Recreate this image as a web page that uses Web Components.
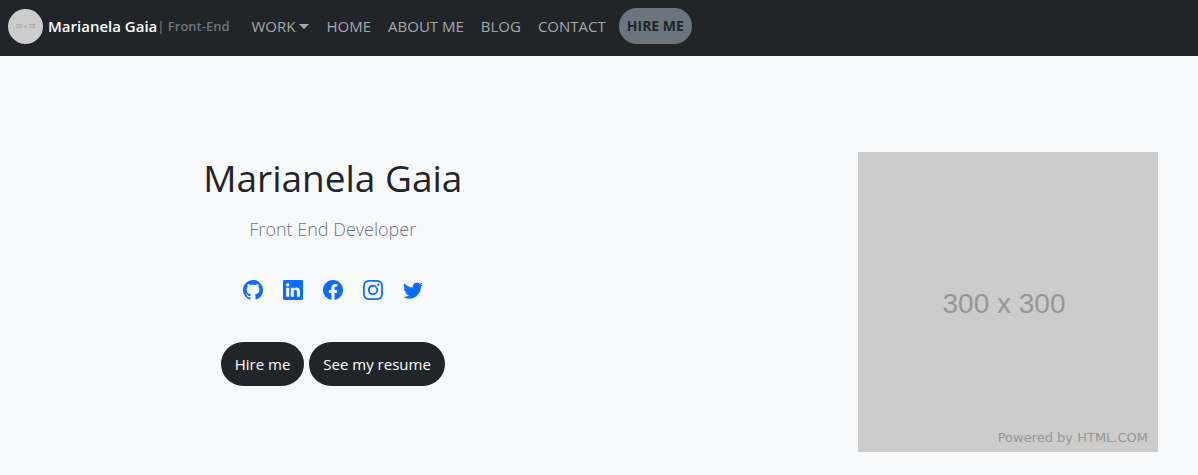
<!DOCTYPE html>
<html lang="en">
<head>
<meta charset="utf-8">
<meta name="viewport" content="width=device-width, initial-scale=1">
<title>Marianela Gaia | Front-End</title>
<style>
body{margin:0;min-height:100vh;background:#f8f9fb;color:#212529;font-family:"Segoe UI","Open Sans","Noto Sans",sans-serif;font-size:15px;line-height:24px}
</style>
</head>
<body>
<site-nav>
  <site-brand name="Marianela Gaia" role-name="| Front-End"></site-brand>
  <nav-link menu>WORK</nav-link>
  <nav-link>HOME</nav-link>
  <nav-link>ABOUT ME</nav-link>
  <nav-link>BLOG</nav-link>
  <nav-link>CONTACT</nav-link>
  <pill-button kind="nav">HIRE ME</pill-button>
</site-nav>
<profile-hero>
  <span slot="name">Marianela Gaia</span>
  <span slot="job">Front End Developer</span>
  <social-link slot="social" icon="github" label="GitHub"></social-link>
  <social-link slot="social" icon="linkedin" label="LinkedIn"></social-link>
  <social-link slot="social" icon="facebook" label="Facebook"></social-link>
  <social-link slot="social" icon="instagram" label="Instagram"></social-link>
  <social-link slot="social" icon="twitter" label="Twitter"></social-link>
  <pill-button slot="actions">Hire me</pill-button>
  <pill-button slot="actions">See my resume</pill-button>
  <placeholder-image slot="picture">300 x 300<span slot="credit">Powered by HTML.COM</span></placeholder-image>
</profile-hero>
<script>
class Base extends HTMLElement {
  connectedCallback() {
    if (!this.shadowRoot) this.attachShadow({mode: 'open'}).innerHTML = this.view();
  }
}
customElements.define('site-nav', class extends Base {
  view() { return `<style>
    :host{display:block;background:#212529}
    nav{display:flex;align-items:center;gap:1px;padding:6px 8px 10px}
  </style><nav aria-label="Main"><slot></slot></nav>`; }
});
customElements.define('site-brand', class extends Base {
  view() { return `<style>
    :host{display:block;margin-right:13px}
    a{display:flex;align-items:center;color:#fff;text-decoration:none;font-weight:600;white-space:nowrap}
    .avatar{display:flex;align-items:center;justify-content:center;width:35px;height:35px;margin-right:5px;border-radius:50%;background:#ccc;color:#999;font:6px/8px "Liberation Sans",sans-serif}
    .role{color:#6c757d;font-size:13px}
  </style><a href="#"><span class="avatar">35 x 35</span><span>${this.getAttribute('name')}</span><span class="role">${this.getAttribute('role-name')}</span></a>`; }
});
customElements.define('nav-link', class extends Base {
  view() { return `<style>
    :host{display:block}
    a{display:flex;align-items:center;padding:8px;color:#a6a8a9;text-decoration:none;white-space:nowrap}
    i{margin-left:4px;border:5px solid transparent;border-top-color:currentColor;border-bottom:0}
  </style><a href="#"><slot></slot>${this.hasAttribute('menu') ? '<i></i>' : ''}</a>`; }
});
customElements.define('pill-button', class extends Base {
  view() { return `<style>
    :host{display:block}
    :host([kind=nav]){margin-left:4px}
    button{display:block;margin:0;padding:10px 14px;border:0;border-radius:22px;background:#212529;color:#fff;font:inherit;line-height:24px;white-space:nowrap;cursor:pointer}
    :host([kind=nav]) button{padding:6px 8px;background:#6c757d;color:#212529;font-size:14px;font-weight:700}
  </style><button type="button"><slot></slot></button>`; }
});
const icons = {
  github: 'M8 0C3.58 0 0 3.58 0 8c0 3.54 2.29 6.53 5.47 7.59.4.07.55-.17.55-.38 0-.19-.01-.82-.01-1.49-2.01.37-2.53-.49-2.69-.94-.09-.23-.48-.94-.82-1.13-.28-.15-.68-.52-.01-.53.63-.01 1.08.58 1.23.82.72 1.21 1.87.87 2.33.66.07-.52.28-.87.51-1.07-1.78-.2-3.64-.89-3.64-3.95 0-.87.31-1.59.82-2.15-.08-.2-.36-1.02.08-2.12 0 0 .67-.21 2.2.82.64-.18 1.32-.27 2-.27s1.36.09 2 .27c1.53-1.04 2.2-.82 2.2-.82.44 1.1.16 1.92.08 2.12.51.56.82 1.27.82 2.15 0 3.07-1.87 3.75-3.65 3.95.29.25.54.73.54 1.48 0 1.07-.01 1.93-.01 2.2 0 .21.15.46.55.38A8.01 8.01 0 0 0 16 8c0-4.42-3.58-8-8-8z',
  linkedin: 'M0 1.146C0 .513.526 0 1.175 0h13.65C15.474 0 16 .513 16 1.146v13.708c0 .633-.526 1.146-1.175 1.146H1.175C.526 16 0 15.487 0 14.854V1.146zm4.943 12.248V6.169H2.542v7.225h2.401zm-1.2-8.212c.837 0 1.358-.554 1.358-1.248-.015-.709-.52-1.248-1.342-1.248-.822 0-1.359.54-1.359 1.248 0 .694.521 1.248 1.327 1.248h.016zm4.908 8.212V9.359c0-.216.016-.432.08-.586.173-.431.568-.878 1.232-.878.869 0 1.216.662 1.216 1.634v3.865h2.401V9.25c0-2.22-1.184-3.252-2.764-3.252-1.274 0-1.845.7-2.165 1.193v.025h-.016a5.54 5.54 0 0 1 .016-.025V6.169h-2.4c.03.678 0 7.225 0 7.225h2.4z',
  facebook: 'M16 8.049c0-4.446-3.582-8.05-8-8.05C3.58 0-.002 3.603-.002 8.05c0 4.017 2.926 7.347 6.75 7.951v-5.625h-2.03V8.05H6.75V6.275c0-2.017 1.195-3.131 3.022-3.131.876 0 1.791.157 1.791.157v1.98h-1.009c-.993 0-1.303.621-1.303 1.258v1.51h2.218l-.354 2.326H9.25V16c3.824-.604 6.75-3.934 6.75-7.951z',
  instagram: 'M8 0C5.829 0 5.556.01 4.703.048 3.85.088 3.269.222 2.76.42a3.917 3.917 0 0 0-1.417.923A3.927 3.927 0 0 0 .42 2.76C.222 3.268.087 3.85.048 4.7.01 5.555 0 5.827 0 8.001c0 2.172.01 2.444.048 3.297.04.852.174 1.433.372 1.942.205.526.478.972.923 1.417.444.445.89.719 1.416.923.51.198 1.09.333 1.942.372C5.555 15.99 5.827 16 8 16s2.444-.01 3.298-.048c.851-.04 1.434-.174 1.943-.372a3.916 3.916 0 0 0 1.416-.923c.445-.445.718-.891.923-1.417.197-.509.332-1.09.372-1.942C15.99 10.445 16 10.173 16 8s-.01-2.445-.048-3.299c-.04-.851-.175-1.433-.372-1.941a3.926 3.926 0 0 0-.923-1.417A3.911 3.911 0 0 0 13.24.42c-.51-.198-1.092-.333-1.943-.372C10.443.01 10.172 0 7.998 0H8zm-.717 1.442h.718c2.136 0 2.389.007 3.232.046.78.035 1.204.166 1.486.275.373.145.64.319.92.599.28.28.453.546.598.92.11.281.24.705.275 1.485.039.843.047 1.096.047 3.231s-.008 2.389-.047 3.232c-.035.78-.166 1.203-.275 1.485a2.47 2.47 0 0 1-.599.919c-.28.28-.546.453-.92.598-.28.11-.704.24-1.485.276-.843.038-1.096.047-3.232.047s-2.39-.009-3.233-.047c-.78-.036-1.203-.166-1.485-.276a2.478 2.478 0 0 1-.92-.598 2.48 2.48 0 0 1-.6-.92c-.109-.281-.24-.705-.275-1.485-.038-.843-.046-1.096-.046-3.233 0-2.136.008-2.388.046-3.231.036-.78.166-1.204.276-1.486.145-.373.319-.64.599-.92.28-.28.546-.453.92-.598.282-.11.705-.24 1.485-.276.738-.034 1.024-.044 2.515-.045v.002zm4.988 1.328a.96.96 0 1 0 0 1.92.96.96 0 0 0 0-1.92zm-4.27 1.122a4.109 4.109 0 1 0 0 8.217 4.109 4.109 0 0 0 0-8.217zm0 1.441a2.667 2.667 0 1 1 0 5.334 2.667 2.667 0 0 1 0-5.334z',
  twitter: 'M5.026 15c6.038 0 9.341-5.003 9.341-9.334 0-.14 0-.282-.006-.422A6.685 6.685 0 0 0 16 3.542a6.658 6.658 0 0 1-1.889.518 3.301 3.301 0 0 0 1.447-1.817 6.533 6.533 0 0 1-2.087.793A3.286 3.286 0 0 0 7.875 6.03a9.325 9.325 0 0 1-6.767-3.429 3.289 3.289 0 0 0 1.018 4.382A3.323 3.323 0 0 1 .64 6.575v.045a3.288 3.288 0 0 0 2.632 3.218 3.203 3.203 0 0 1-.865.115 3.23 3.23 0 0 1-.614-.057 3.283 3.283 0 0 0 3.067 2.277A6.588 6.588 0 0 1 .78 13.58a6.32 6.32 0 0 1-.78-.045A9.344 9.344 0 0 0 5.026 15z'
};
customElements.define('social-link', class extends Base {
  view() { return `<style>
    :host{display:block}
    a{display:block;color:#0d6efd}
    svg{display:block;width:20px;height:20px;fill:currentColor}
  </style><a href="#" aria-label="${this.getAttribute('label')}"><svg viewBox="0 0 16 16" aria-hidden="true"><path d="${icons[this.getAttribute('icon')]}"/></svg></a>`; }
});
customElements.define('placeholder-image', class extends Base {
  view() { return `<style>
    :host{display:grid;grid-template-rows:1fr auto 1fr;box-sizing:border-box;width:300px;height:300px;padding:8px 10px 4px;background:#ccc;color:#969696;font:28px/36px "Liberation Sans",sans-serif}
    .size{grid-row:2;padding-right:8px;text-align:center}
    .credit{grid-row:3;align-self:end;text-align:right;font:13px/20px "DejaVu Sans",sans-serif}
  </style><div class="size"><slot></slot></div><div class="credit"><slot name="credit"></slot></div>`; }
});
customElements.define('profile-hero', class extends Base {
  view() { return `<style>
    :host{display:grid;grid-template-columns:5fr 4fr;padding:96px 0 20px}
    .intro{display:flex;flex-direction:column;align-items:center}
    h1{margin:2px 0 12px;font-size:37px;line-height:48px;font-weight:400}
    p{margin:0;color:#6c757d;font-size:18px;line-height:30px;font-weight:300}
    .social{display:flex;gap:20px;margin:36px 0 42px}
    .actions{display:flex;gap:5px}
    .picture{display:flex;justify-content:flex-end;padding-right:40px}
  </style><section class="intro"><h1><slot name="name"></slot></h1><p><slot name="job"></slot></p>
  <div class="social"><slot name="social"></slot></div><div class="actions"><slot name="actions"></slot></div></section>
  <div class="picture"><slot name="picture"></slot></div>`; }
});
</script>
</body>
</html>
